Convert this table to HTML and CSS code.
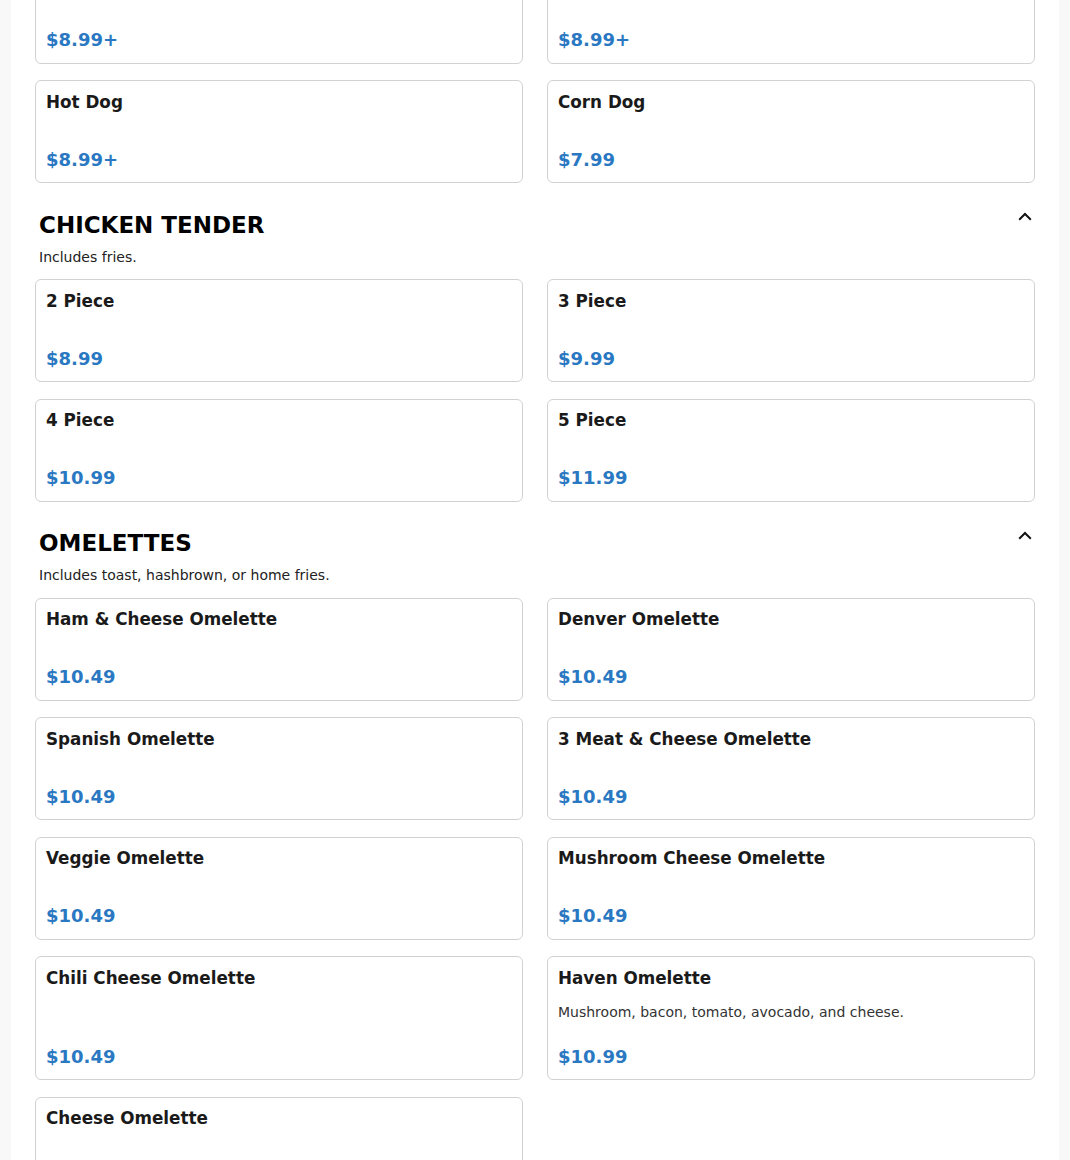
FILE: index.html
```html
<!DOCTYPE html>
<html lang="en">
<head>
<meta charset="utf-8">
<title>Menu</title>
<link rel="stylesheet" href="styles.css">
</head>
<body>
<main class="page">
  <div class="grid grid-first">
    <div class="card"><div class="card-title">Chili Dog</div><div class="card-price">$8.99+</div></div>
    <div class="card"><div class="card-title">Polish Dog</div><div class="card-price">$8.99+</div></div>
    <div class="card"><div class="card-title">Hot Dog</div><div class="card-price">$8.99+</div></div>
    <div class="card"><div class="card-title">Corn Dog</div><div class="card-price">$7.99</div></div>
  </div>

  <section class="section">
    <div class="section-head">
      <h2 class="section-title">CHICKEN TENDER</h2>
      <button class="toggle" aria-label="Collapse">
        <svg width="14" height="9" viewBox="0 0 14 9"><path d="M1.2 7.8 L7 2 L12.8 7.8" fill="none" stroke="#111" stroke-width="2"/></svg>
      </button>
    </div>
    <p class="section-sub">Includes fries.</p>
    <div class="grid">
      <div class="card"><div class="card-title">2 Piece</div><div class="card-price">$8.99</div></div>
      <div class="card"><div class="card-title">3 Piece</div><div class="card-price">$9.99</div></div>
      <div class="card"><div class="card-title">4 Piece</div><div class="card-price">$10.99</div></div>
      <div class="card"><div class="card-title">5 Piece</div><div class="card-price">$11.99</div></div>
    </div>
  </section>

  <section class="section">
    <div class="section-head">
      <h2 class="section-title">OMELETTES</h2>
      <button class="toggle" aria-label="Collapse">
        <svg width="14" height="9" viewBox="0 0 14 9"><path d="M1.2 7.8 L7 2 L12.8 7.8" fill="none" stroke="#111" stroke-width="2"/></svg>
      </button>
    </div>
    <p class="section-sub">Includes toast, hashbrown, or home fries.</p>
    <div class="grid">
      <div class="card"><div class="card-title">Ham &amp; Cheese Omelette</div><div class="card-price">$10.49</div></div>
      <div class="card"><div class="card-title">Denver Omelette</div><div class="card-price">$10.49</div></div>
      <div class="card"><div class="card-title">Spanish Omelette</div><div class="card-price">$10.49</div></div>
      <div class="card"><div class="card-title">3 Meat &amp; Cheese Omelette</div><div class="card-price">$10.49</div></div>
      <div class="card"><div class="card-title">Veggie Omelette</div><div class="card-price">$10.49</div></div>
      <div class="card"><div class="card-title">Mushroom Cheese Omelette</div><div class="card-price">$10.49</div></div>
      <div class="card"><div class="card-title">Chili Cheese Omelette</div><div class="card-price">$10.49</div></div>
      <div class="card"><div class="card-title">Haven Omelette</div><div class="card-desc">Mushroom, bacon, tomato, avocado, and cheese.</div><div class="card-price">$10.99</div></div>
      <div class="card"><div class="card-title">Cheese Omelette</div><div class="card-price">$10.49</div></div>
    </div>
  </section>
</main>
</body>
</html>
```

FILE: styles.css
```css
html, body {
  margin: 0;
  padding: 0;
  background: #f8f8f8;
  font-family: "DejaVu Sans", "Liberation Sans", sans-serif;
  color: #1a1a1a;
}

.page {
  width: 1048px;
  margin: 0 auto;
  background: #ffffff;
  padding: 0 24px 40px;
  box-sizing: border-box;
  min-height: 1200px;
  overflow: hidden;
}

.grid {
  display: grid;
  grid-template-columns: 1fr 1fr;
  column-gap: 24px;
  row-gap: 16.5px;
}

.grid-first {
  margin-top: -39.5px;
}

.card {
  display: flex;
  flex-direction: column;
  min-height: 103px;
  box-sizing: border-box;
  border: 1px solid #d2d2d2;
  border-radius: 6px;
  padding: 10.5px 10px 12.5px;
  background: #fff;
}

.card-title {
  font-size: 16.8px;
  font-weight: bold;
  line-height: 21px;
  color: #1a1a1a;
  margin-bottom: 14px;
}

.card-desc {
  font-size: 14px;
  line-height: 18px;
  color: #333;
  margin-bottom: 25px;
}

.card-price {
  margin-top: auto;
  font-size: 18px;
  font-weight: bold;
  line-height: 21px;
  color: #2a78c2;
}

.section {
  padding-top: 27.5px;
}

.section-head {
  display: flex;
  justify-content: space-between;
  align-items: flex-start;
  padding: 0 3px 0 4px;
}

.section-title {
  margin: 0;
  font-size: 23px;
  line-height: 29px;
  font-weight: bold;
  color: #000;
}

.toggle {
  border: 0;
  background: none;
  padding: 0;
  margin-top: 1.5px;
  width: 14px;
  height: 9px;
  cursor: pointer;
  display: flex;
}

.section-sub {
  margin: 8px 0 13.5px;
  padding-left: 4px;
  font-size: 14px;
  line-height: 18px;
  color: #222;
}
```
